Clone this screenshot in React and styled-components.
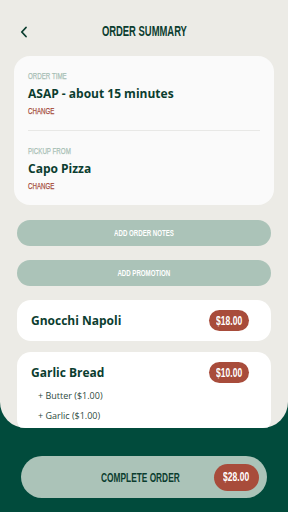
import styled, { createGlobalStyle } from "styled-components";

const GlobalStyle = createGlobalStyle`
  html, body {
    margin: 0;
    padding: 0;
  }
  body {
    background: #014b3c;
    font-family: "Open Sans", "Liberation Sans", sans-serif;
  }
  * {
    box-sizing: border-box;
  }
`;

const items = [
  { name: "Gnocchi Napoli", price: "$18.00", extras: [] },
  {
    name: "Garlic Bread",
    price: "$10.00",
    extras: ["+ Butter ($1.00)", "+ Garlic ($1.00)"],
  },
];

export default function App() {
  return (
    <>
      <GlobalStyle />
      <Screen>
        <Panel>
          <Header>
            <BackButton aria-label="Back">
              <svg width="8" height="12" viewBox="0 0 8 12">
                <polyline
                  points="6,1.5 1.8,6 6,10.5"
                  fill="none"
                  stroke="#0b3d2f"
                  strokeWidth="1.8"
                  strokeLinecap="round"
                  strokeLinejoin="round"
                />
              </svg>
            </BackButton>
            <Title>ORDER SUMMARY</Title>
          </Header>

          <Content>
            <InfoCard>
              <InfoSection>
                <Label>ORDER TIME</Label>
                <Value>ASAP - about 15 minutes</Value>
                <ChangeLink>CHANGE</ChangeLink>
              </InfoSection>
              <Divider />
              <InfoSection>
                <Label>PICKUP FROM</Label>
                <Value>Capo Pizza</Value>
                <ChangeLink>CHANGE</ChangeLink>
              </InfoSection>
            </InfoCard>

            <ActionButton>
              <Narrow>ADD ORDER NOTES</Narrow>
            </ActionButton>
            <ActionButton>
              <Narrow>ADD PROMOTION</Narrow>
            </ActionButton>

            <ItemList>
              {items.map((item) => (
                <ItemCard key={item.name}>
                  <ItemRow>
                    <ItemName>{item.name}</ItemName>
                    <PricePill>
                      <Narrow>{item.price}</Narrow>
                    </PricePill>
                  </ItemRow>
                  {item.extras.map((extra) => (
                    <Extra key={extra}>{extra}</Extra>
                  ))}
                </ItemCard>
              ))}
            </ItemList>
          </Content>
        </Panel>

        <Footer>
          <CompleteButton>
            <span />
            <CompleteLabel>COMPLETE ORDER</CompleteLabel>
            <TotalPill>
              <Narrow>$28.00</Narrow>
            </TotalPill>
          </CompleteButton>
        </Footer>
      </Screen>
    </>
  );
}

// no condensed face is installed, so narrow glyphs are made by squeezing Liberation Sans
const Narrow = styled.span`
  display: inline-block;
  font-family: "Liberation Sans", Arial, sans-serif;
  font-weight: 700;
  white-space: nowrap;
  transform: scaleX(0.68);
  transform-origin: center;
`;

const Screen = styled.div`
  width: 288px;
  height: 512px;
  background: #014b3c;
  display: flex;
  flex-direction: column;
  overflow: hidden;
`;

const Panel = styled.div`
  height: 428px;
  background: #ecebe6;
  border-radius: 0 0 26px 26px;
  display: flex;
  flex-direction: column;
  overflow: hidden;
`;

const Header = styled.div`
  height: 56px;
  flex-shrink: 0;
  display: flex;
  align-items: center;
  justify-content: center;
  padding-top: 6px;
  position: relative;
`;

const BackButton = styled.button`
  position: absolute;
  left: 18px;
  top: 25px;
  width: 12px;
  height: 14px;
  padding: 0;
  border: none;
  background: none;
  display: flex;
  align-items: center;
  justify-content: center;
`;

const Title = styled(Narrow).attrs({ as: "h1" })`
  margin: 0;
  font-size: 14.5px;
  color: #0b3d2f;
  transform: scaleX(0.65);
`;

const Content = styled.div`
  flex: 1;
  min-height: 0;
  overflow: hidden;
  padding: 0 14px;
  display: flex;
  flex-direction: column;
`;

const InfoCard = styled.div`
  background: #fafafa;
  border-radius: 16px;
  padding: 14px 14px 13px;
  margin-bottom: 15px;
  flex-shrink: 0;
`;

const InfoSection = styled.div`
  display: flex;
  flex-direction: column;
  align-items: flex-start;
`;

const Label = styled(Narrow)`
  font-size: 9.5px;
  line-height: 12px;
  font-weight: 400;
  -webkit-text-stroke: 0.25px #a8bfb5;
  color: #a8bfb5;
  transform: scaleX(0.65);
  transform-origin: left center;
`;

const Value = styled.div`
  margin-top: 3px;
  font-size: 12px;
  line-height: 17px;
  font-weight: 700;
  color: #0b3d2f;
`;

const ChangeLink = styled(Narrow)`
  margin-top: 3px;
  font-size: 9.5px;
  line-height: 12px;
  font-weight: 400;
  -webkit-text-stroke: 0.25px #a54a3a;
  color: #a54a3a;
  transform: scaleX(0.65);
  transform-origin: left center;
`;

const Divider = styled.div`
  height: 1px;
  background: #e8e8e6;
  margin: 13px 0 14px;
`;

const ActionButton = styled.button`
  height: 26px;
  margin: 0 3px 14px;
  border: none;
  border-radius: 13px;
  background: #abc3b8;
  color: #ffffff;
  font-size: 9px;
  flex-shrink: 0;
  display: flex;
  align-items: center;
  justify-content: center;
`;

const ItemList = styled.div`
  display: flex;
  flex-direction: column;
  gap: 11px;
  margin: 0 3px;
`;

const ItemCard = styled.div`
  background: #ffffff;
  border-radius: 14px;
  padding: 10px 22px 10px 14px;
  flex-shrink: 0;
`;

const ItemRow = styled.div`
  height: 21px;
  display: flex;
  align-items: center;
  justify-content: space-between;
`;

const ItemName = styled.div`
  font-size: 12px;
  font-weight: 700;
  color: #0b3d2f;
`;

const PricePill = styled.div`
  width: 40px;
  height: 21px;
  border-radius: 11px;
  background: #a84c3b;
  color: #ffffff;
  font-size: 12.5px;
  display: flex;
  align-items: center;
  justify-content: center;
`;

const Extra = styled.div`
  margin-top: 5px;
  padding-left: 7px;
  font-size: 9px;
  line-height: 15px;
  color: #2d4a40;
`;

const Footer = styled.div`
  flex: 1;
  display: flex;
  align-items: flex-start;
  justify-content: center;
  padding-top: 28px;
`;

const CompleteButton = styled.button`
  width: 246px;
  height: 42px;
  border: none;
  border-radius: 21px;
  background: #abc3b8;
  padding: 0 8px 0 0;
  display: grid;
  grid-template-columns: 1fr auto 1fr;
  align-items: center;
`;

const CompleteLabel = styled(Narrow)`
  font-size: 13px;
  color: #0b3d2f;
  transform: scaleX(0.64);
`;

const TotalPill = styled.span`
  justify-self: end;
  width: 45px;
  height: 27px;
  border-radius: 14px;
  background: #a84c3b;
  color: #ffffff;
  font-size: 12.5px;
  display: flex;
  align-items: center;
  justify-content: center;
`;
